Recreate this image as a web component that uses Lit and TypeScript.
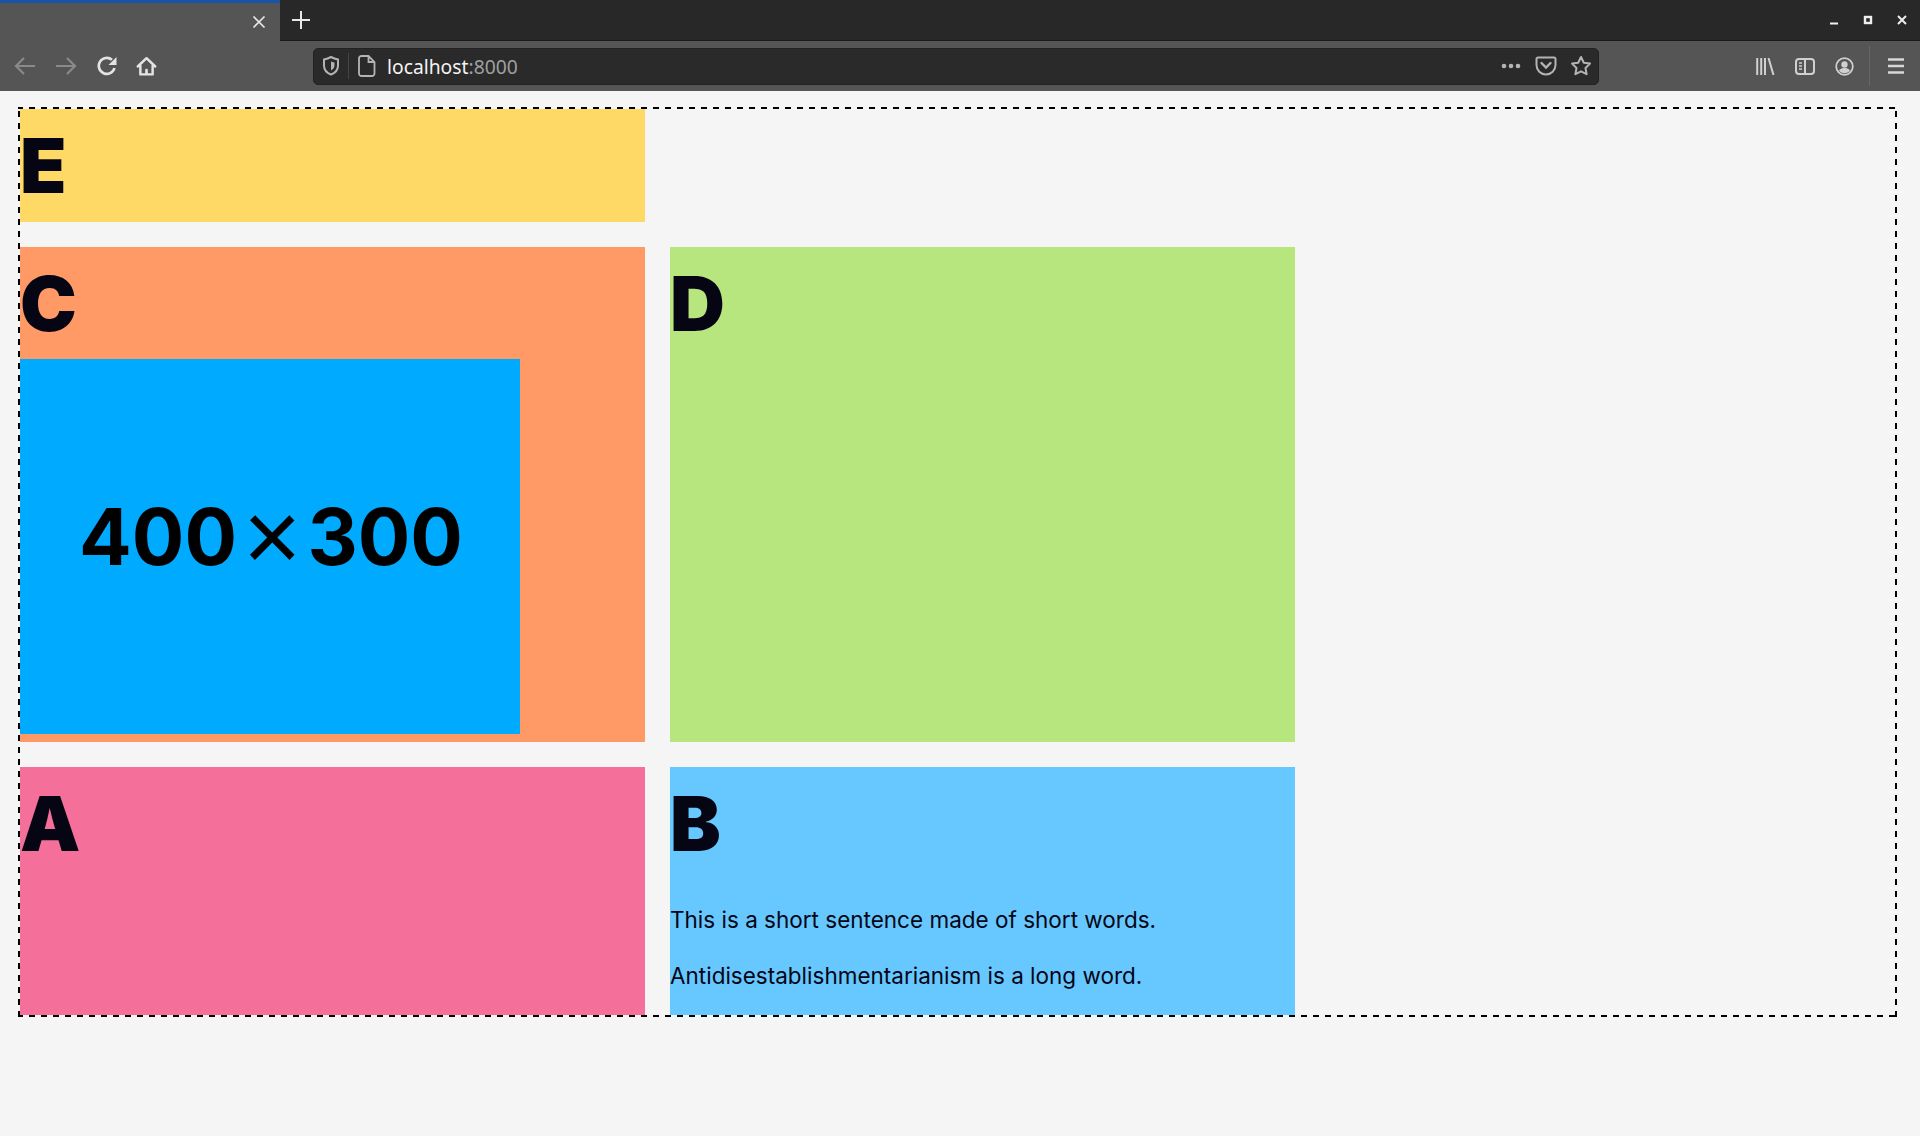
import { LitElement, html, css } from "lit";
import { customElement } from "lit/decorators.js";

@customElement("app-root")
export class AppRoot extends LitElement {
  static styles = css`
    :host { display: block; width: 1920px; height: 1136px; overflow: hidden; background: #f5f5f5; font-family: Inter, sans-serif; color: #050514; }
    .tabbar { height: 40px; background: #282828; border-bottom: 1px solid #1a1a1a; display: flex; align-items: stretch; box-sizing: content-box; }
    .tab { width: 280px; height: 41px; background: #555; border-top: 3px solid #1a54a8; box-sizing: border-box; display: flex; align-items: center; justify-content: flex-end; padding-right: 14px; }
    .newtab { margin-left: 11px; display: flex; align-items: center; }
    .winctl { margin-left: auto; display: flex; align-items: center; gap: 24px; padding-right: 13px; }
    .toolbar { height: 50px; background: #555; display: flex; align-items: center; }
    .nav { display: flex; align-items: center; gap: 16.5px; padding-left: 13px; width: 313px; box-sizing: border-box; }
    .reload { margin-left: 1px; }
    .urlbar { width: 1286px; height: 37px; background: #2a2a2a; border-radius: 5px; border: 1px solid #222; box-sizing: border-box; display: flex; align-items: center; padding-left: 8px; }
    .sep { width: 1px; height: 26px; background: #444; margin: 0 9px 0 8px; }
    .url { font-family: "Noto Sans", sans-serif; font-size: 19.3px; color: #f4f4f4; margin-left: 11px; white-space: nowrap; }
    .url span { color: #a0a0a0; }
    .urlright { margin-left: auto; display: flex; align-items: center; padding-right: 6px; }
    .dots { margin-right: 14px; }
    .pocket { margin-right: 13px; }
    .tools { display: flex; align-items: center; gap: 20px; margin-left: 157px; }
    .vsep { width: 1px; height: 40px; background: #666; margin: 0 -2px 0 -5px; }
    svg { display: block; flex: none; }
    .main { padding: 16px 23px 0 18px; }
    .grid {
      height: 910px; box-sizing: border-box; padding: 2px;
      display: grid; grid-template-columns: 625px 625px; grid-template-rows: 113px 495px 248px; gap: 25px; align-content: start;
      background:
        linear-gradient(90deg, #000 6px, transparent 6px) -1px 0 / 12px 2px repeat-x,
        linear-gradient(90deg, #000 6px, transparent 6px) -1px 100% / 12px 2px repeat-x,
        linear-gradient(#000 6px, transparent 6px) 0 4px / 2px 12px repeat-y,
        linear-gradient(#000 6px, transparent 6px) 100% 4px / 2px 12px repeat-y;
    }
    .box { overflow: hidden; }
    .e { background: #ffd966; }
    .c { background: #ff9966; }
    .d { background: #b8e67e; }
    .a { background: #f4709b; }
    .b { background: #66c8ff; }
    h1 { margin: 18px 0 0 0; font-size: 76px; font-weight: 900; line-height: 76px; }
    .ph { width: 500px; height: 375px; background: #00aaff; margin-top: 18px; padding: 0 0 21px 2px; box-sizing: border-box; display: flex; align-items: center; justify-content: center; font-family: Inter, sans-serif; font-weight: 700; font-size: 78px; color: #000; }
    .times { font-family: "Liberation Sans", sans-serif; font-weight: 400; font-size: 100px; line-height: 80px; margin: 0 6px; }
    p { margin: 0; font-size: 22.5px; line-height: 56px; }
    .ps { margin-top: 30.5px; }
  `;

  render() {
    return html`
      <div class="tabbar">
        <div class="tab">
          <svg width="14" height="14" viewBox="0 0 14 14"><path d="M1.5 1.5l11 11M12.5 1.5l-11 11" stroke="#e8e8e8" stroke-width="1.7"/></svg>
        </div>
        <div class="newtab">
          <svg width="20" height="20" viewBox="0 0 20 20"><path d="M10 1v18M1 10h18" stroke="#e8e8e8" stroke-width="2"/></svg>
        </div>
        <div class="winctl">
          <svg width="10" height="10" viewBox="0 0 10 10"><path d="M1 8.500h8" stroke="#eee" stroke-width="2"/></svg>
          <svg width="10" height="10" viewBox="0 0 10 10"><rect x="2" y="2" width="6" height="6" fill="none" stroke="#eee" stroke-width="2.400"/></svg>
          <svg width="10" height="10" viewBox="0 0 10 10"><path d="M1 1l8 8M9 1l-8 8" stroke="#eee" stroke-width="2"/></svg>
        </div>
      </div>
      <div class="toolbar">
        <div class="nav">
          <svg width="24" height="24" viewBox="0 0 24 24"><path d="M22 12H3M11 4l-8 8 8 8" stroke="#8a8a8a" stroke-width="2.2" fill="none"/></svg>
          <svg width="24" height="24" viewBox="0 0 24 24"><path d="M2 12h19M13 4l8 8-8 8" stroke="#8a8a8a" stroke-width="2.2" fill="none"/></svg>
          <svg class="reload" width="24" height="24" viewBox="0 0 24 24"><path d="M19.500 14a8 8 0 1 1-2.500-8.200" stroke="#e4e4e4" stroke-width="2.600" fill="none"/><path d="M21.500 3v8h-8z" fill="#e4e4e4"/></svg>
          <svg width="21" height="21" viewBox="0 0 24 24"><path d="M2 12L12 2.500 22 12M5 11v10h14V11" stroke="#e4e4e4" stroke-width="2.800" stroke-linecap="round" stroke-linejoin="round" fill="none"/><path d="M10.500 21v-5a1.500 1.500 0 0 1 3 0v5z" fill="#e4e4e4"/></svg>
        </div>
        <div class="urlbar">
          <svg width="18" height="20" viewBox="0 0 18 20"><path d="M2 3.500C5 2.800 7 2 9 1c2 1 4 1.800 7 2.500v6c0 4-3 7.500-7 9-4-1.500-7-5-7-9z" stroke="#b4b4b4" stroke-width="2" fill="none"/><path d="M9 5.500c1 .4 2 .7 3.500 1v3c0 2-1.500 4-3.500 5z" fill="#b4b4b4"/></svg>
          <div class="sep"></div>
          <svg width="18" height="22" viewBox="0 0 18 22"><path d="M3.500 1h7l6 6v11.500a2.500 2.500 0 0 1-2.500 2.500H3.500A2.500 2.500 0 0 1 1 18.500v-15A2.500 2.500 0 0 1 3.500 1zM10.500 1v6h6" stroke="#b4b4b4" stroke-width="1.800" fill="none"/></svg>
          <div class="url">localhost<span>:8000</span></div>
          <div class="urlright">
            <svg class="dots" width="20" height="6" viewBox="0 0 20 6"><circle cx="3" cy="3" r="2.300" fill="#b4b4b4"/><circle cx="10" cy="3" r="2.300" fill="#b4b4b4"/><circle cx="17" cy="3" r="2.300" fill="#b4b4b4"/></svg>
            <svg class="pocket" width="22" height="20" viewBox="0 0 22 20"><path d="M3 1.500h16a1.500 1.500 0 0 1 1.500 1.500v6a9.500 9.500 0 0 1-19 0V3A1.500 1.500 0 0 1 3 1.500z" stroke="#b4b4b4" stroke-width="2" fill="none"/><path d="M6.500 7l4.500 4.500L15.500 7" stroke="#b4b4b4" stroke-width="2.400" fill="none" stroke-linecap="round"/></svg>
            <svg width="22" height="22" viewBox="0 0 22 22"><path d="M11 2l2.800 5.700 6.200.9-4.500 4.400 1.100 6.200L11 16.300 5.400 19.200 6.500 13 2 8.600l6.200-.9z" stroke="#b4b4b4" stroke-width="2" stroke-linejoin="round" fill="none"/></svg>
          </div>
        </div>
        <div class="tools">
          <svg width="19" height="17" viewBox="0 0 19 17"><path d="M1.200 0v17M5.200 0v17M9 0v17M12.500 0l5 17" stroke="#d0d0d0" stroke-width="2" fill="none"/></svg>
          <svg width="20" height="17" viewBox="0 0 20 17"><rect x="1" y="1" width="18" height="15" rx="3" stroke="#d0d0d0" stroke-width="2" fill="none"/><path d="M10 1v15" stroke="#d0d0d0" stroke-width="2"/><path d="M4 5h3M4 8h3M4 11h3" stroke="#d0d0d0" stroke-width="1.500"/></svg>
          <svg width="19" height="19" viewBox="0 0 24 24"><circle cx="12" cy="12" r="10.500" stroke="#d0d0d0" stroke-width="2.200" fill="none"/><circle cx="12" cy="9.500" r="4" fill="#d0d0d0"/><path d="M5 17c2-2.500 4.500-3 7-3s5 .5 7 3c-1.500 2.300-4 3.500-7 3.500s-5.500-1.200-7-3.500z" fill="#d0d0d0"/></svg>
          <div class="vsep"></div>
          <svg width="16" height="16" viewBox="0 0 16 16"><path d="M0 1.500h16M0 8h16M0 14.500h16" stroke="#d8d8d8" stroke-width="2.400"/></svg>
        </div>
      </div>
      <div class="main">
        <div class="grid">
          <div class="box e"><h1>E</h1></div>
          <div></div>
          <div class="box c"><h1>C</h1><div class="ph">400<span class="times">×</span>300</div></div>
          <div class="box d"><h1>D</h1></div>
          <div class="box a"><h1>A</h1></div>
          <div class="box b"><h1>B</h1><div class="ps"><p>This is a short sentence made of short words.</p><p>Antidisestablishmentarianism is a long word.</p></div></div>
        </div>
      </div>
    `;
  }
}
